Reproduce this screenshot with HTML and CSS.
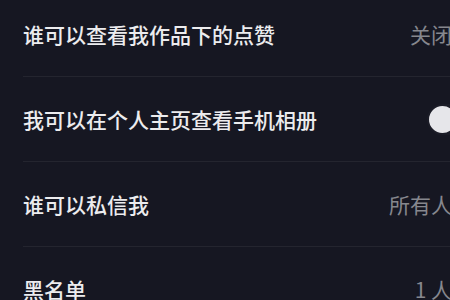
FILE: index.html
```html
<!DOCTYPE html>
<html lang="zh-CN">
<head>
<meta charset="utf-8">
<link rel="stylesheet" href="styles.css">
</head>
<body>
<div class="list">
  <div class="row">
    <span class="label">谁可以查看我作品下的点赞</span>
    <span class="value">关闭</span>
  </div>
  <div class="row">
    <span class="label">我可以在个人主页查看手机相册</span>
    <span class="toggle"><span class="knob"></span></span>
  </div>
  <div class="row">
    <span class="label">谁可以私信我</span>
    <span class="value">所有人</span>
  </div>
  <div class="row">
    <span class="label">黑名单</span>
    <span class="value">1 人</span>
  </div>
</div>
</body>
</html>
```
FILE: styles.css
```css
html, body {
  margin: 0;
  padding: 0;
  background: #161722;
  overflow: hidden;
  width: 450px;
  height: 300px;
}
.list {
  margin-top: -8px;
  padding-left: 23px;
  font-family: "Noto Sans CJK SC", "Noto Sans", sans-serif;
}
.row {
  height: 84px;
  display: flex;
  align-items: center;
  justify-content: space-between;
  border-bottom: 1px solid #24252f;
}
.label {
  color: #ececee;
  font-size: 21px;
  font-weight: 500;
  white-space: nowrap;
}
.value {
  color: #86878e;
  font-size: 21px;
  font-weight: 400;
  white-space: nowrap;
  margin-right: -2px;
}
.toggle {
  display: flex;
  align-items: center;
  width: 50px;
  height: 31px;
  margin-right: -27px;
  border-radius: 16px;
  background: #1b1c27;
  padding-left: 2px;
  box-sizing: border-box;
}
.knob {
  width: 27px;
  height: 27px;
  border-radius: 50%;
  background: #e6e6ea;
}
```
